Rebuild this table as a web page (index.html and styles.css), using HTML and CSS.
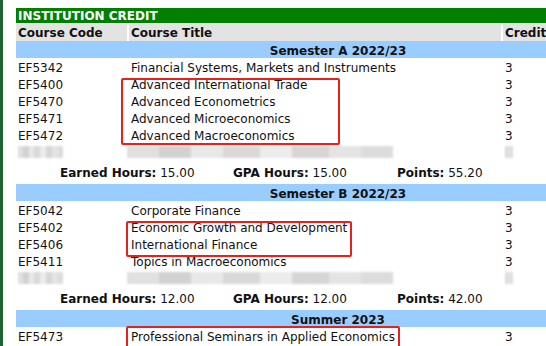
FILE: index.html
```html
<!DOCTYPE html>
<html>
<head>
<meta charset="utf-8">
<link rel="stylesheet" href="styles.css">
</head>
<body>
<div class="page">
  <div class="sidebar"></div>
  <div class="content">
    <div class="sheet">
      <div class="title">INSTITUTION CREDIT</div>
      <div class="row head">
        <div class="cell">Course Code</div>
        <div class="cell">Course Title</div>
        <div class="cell">Credits</div>
      </div>

      <div class="band">Semester A 2022/23</div>
      <div class="row"><div>EF5342</div><div>Financial Systems, Markets and Instruments</div><div>3</div></div>
      <div class="row"><div>EF5400</div><div>Advanced International Trade</div><div>3</div></div>
      <div class="row"><div>EF5470</div><div>Advanced Econometrics</div><div>3</div></div>
      <div class="row"><div>EF5471</div><div>Advanced Microeconomics</div><div>3</div></div>
      <div class="row"><div>EF5472</div><div>Advanced Macroeconomics</div><div>3</div></div>
      <div class="row blur">
        <div><span class="mos m-code"></span></div>
        <div><span class="mos m-title"></span></div>
        <div><span class="mos m-cr"></span></div>
      </div>
      <div class="summary">
        <div><b>Earned Hours:</b> 15.00</div>
        <div><b>GPA Hours:</b> 15.00</div>
        <div><b>Points:</b> 55.20</div>
      </div>

      <div class="band">Semester B 2022/23</div>
      <div class="row"><div>EF5042</div><div>Corporate Finance</div><div>3</div></div>
      <div class="row"><div>EF5402</div><div>Economic Growth and Development</div><div>3</div></div>
      <div class="row"><div>EF5406</div><div>International Finance</div><div>3</div></div>
      <div class="row"><div>EF5411</div><div>Topics in Macroeconomics</div><div>3</div></div>
      <div class="row blur">
        <div><span class="mos m-code"></span></div>
        <div><span class="mos m-title"></span></div>
        <div><span class="mos m-cr"></span></div>
      </div>
      <div class="summary">
        <div><b>Earned Hours:</b> 12.00</div>
        <div><b>GPA Hours:</b> 12.00</div>
        <div><b>Points:</b> 42.00</div>
      </div>

      <div class="band">Summer 2023</div>
      <div class="row"><div>EF5473</div><div>Professional Seminars in Applied Economics</div><div>3</div></div>
    </div>
    <div class="mark mark-a"></div>
    <div class="mark mark-b"></div>
    <div class="mark mark-c"></div>
  </div>
</div>
</body>
</html>
```

FILE: styles.css
```css
html, body {
  margin: 0;
  padding: 0;
  background: #fff;
}
* {
  box-sizing: border-box;
}
body {
  width: 546px;
  height: 346px;
  overflow: hidden;
  font-family: "DejaVu Sans", Verdana, sans-serif;
  font-size: 12px;
  color: #111;
}
.page {
  display: flex;
  height: 346px;
}
.sidebar {
  width: 3px;
  flex: none;
  background: #1f6234;
}
.content {
  position: relative;
  flex: none;
  padding: 8px 0 0 13px;
}
.sheet {
  width: 644px;
}
.title {
  height: 15px;
  padding-top: 2px;
  line-height: 13px;
  background: #008000;
  color: #fff;
  font-weight: bold;
  padding-left: 2px;
  margin-bottom: 1px;
}
.row {
  display: grid;
  grid-template-columns: 111px 372px 1fr;
  column-gap: 2px;
  height: 17px;
}
.row > div {
  padding: 4px 0 0 2px;
  line-height: 13px;
  white-space: nowrap;
}
.head .cell {
  background: #e3e3e3;
  font-weight: bold;
  padding-top: 2px;
  line-height: 15px;
}
.band {
  height: 17px;
  padding-top: 3px;
  line-height: 14px;
  background: #99ccff;
  text-align: center;
  font-weight: bold;
}
.summary {
  display: grid;
  grid-template-columns: 173px 164px 1fr;
  padding: 2px 0 0 44px;
  height: 24px;
  line-height: 22px;
  white-space: nowrap;
}
.blur > div {
  padding-top: 3px;
}
.mos {
  display: inline-block;
  height: 12px;
  vertical-align: top;
  background:
    linear-gradient(90deg,
      #e0e0e0 0 12%, #d2d2d2 12% 24%, #e8e8e8 24% 36%, #d9d9d9 36% 50%,
      #ececec 50% 62%, #d6d6d6 62% 76%, #e4e4e4 76% 88%, #dcdcdc 88% 100%);
  filter: blur(1px);
}
.m-code { width: 45px; }
.m-title { width: 266px; margin-left: -4px; }
.m-cr { width: 8px; }
.mark {
  position: absolute;
  border: 2px solid #e8211c;
  border-radius: 2px;
}
.mark-a { left: 118px; top: 78px; width: 219px; height: 67px; }
.mark-b { left: 123px; top: 221px; width: 226px; height: 36px; }
.mark-c { left: 123px; top: 326px; width: 274px; height: 30px; }
```
